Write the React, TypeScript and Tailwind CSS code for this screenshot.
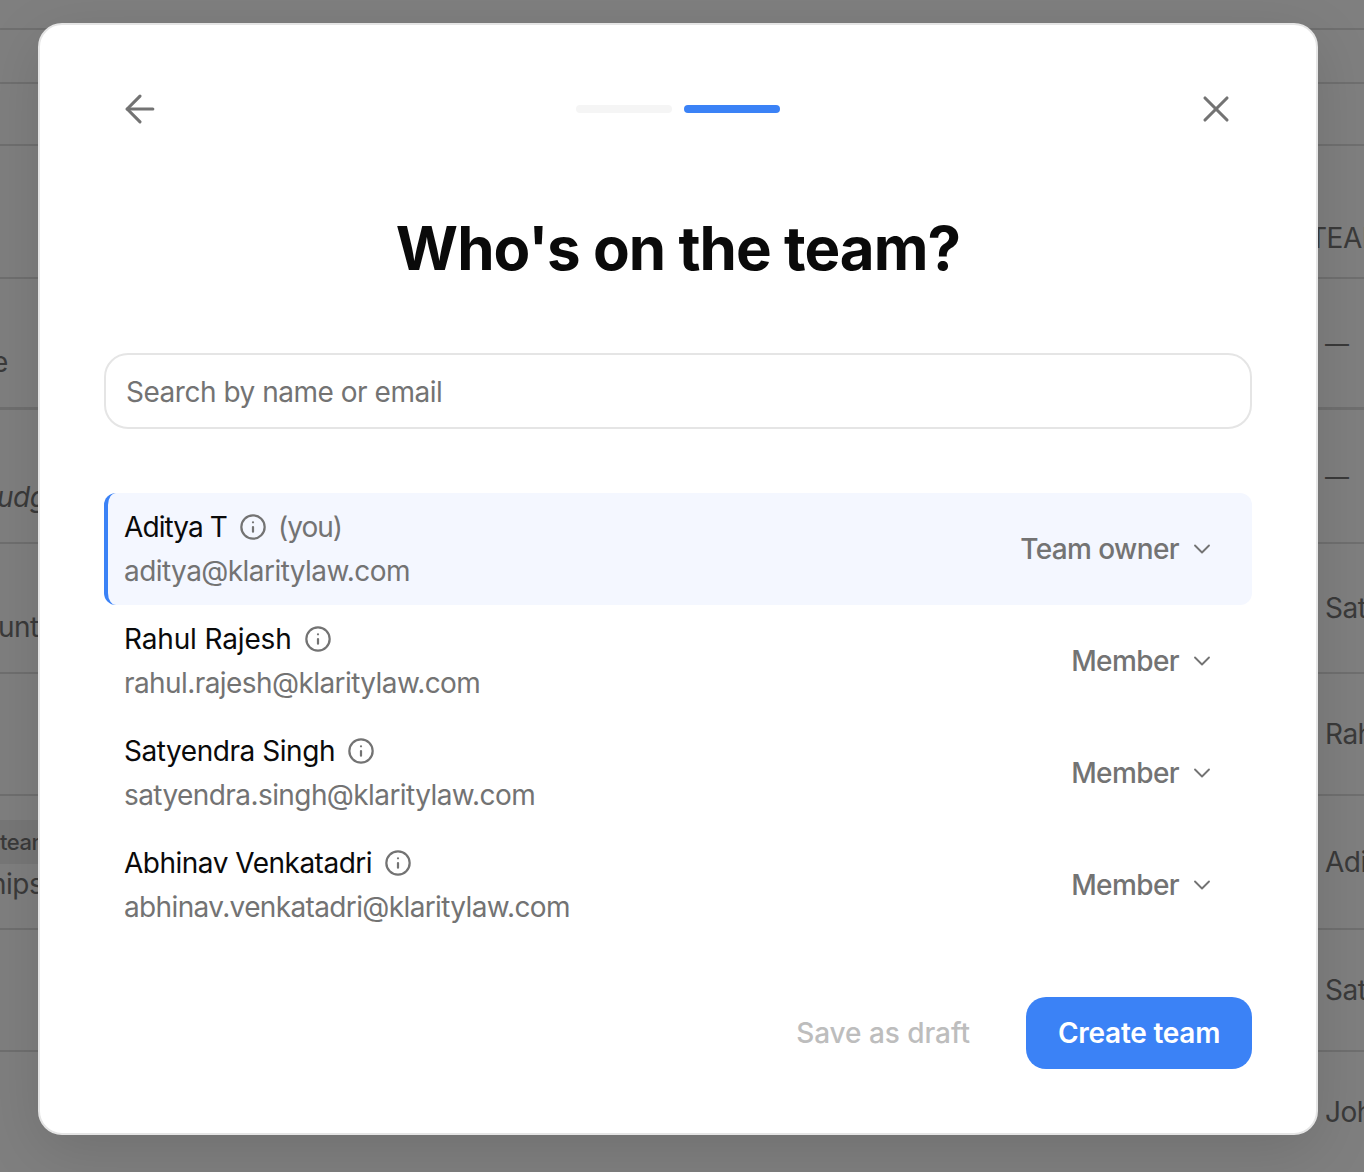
import { ArrowLeft, X, Info, ChevronDown } from "lucide-react";

const bgRows = [
  { h: "h-[30px]", border: "border-b-2", leftClass: "", rightClass: "", left: "", right: "" },
  { h: "h-[54px]", border: "border-b-2", leftClass: "", rightClass: "", left: "", right: "", leftOnly: true },
  { h: "h-[62px]", border: "border-b-2", leftClass: "", rightClass: "", left: "", right: "", leftOnly: true },
  { h: "h-[133px]", border: "border-b-2", leftClass: "", rightClass: "pt-[52px] -ml-[16px]", left: "", right: "TEAM" },
  { h: "h-[131px]", border: "border-b-[3px]", leftClass: "pt-[38px] -ml-[8px]", rightClass: "text-[24px] pt-[1px]", left: "e", right: "—" },
  { h: "h-[134px]", border: "border-b-2", leftClass: "pt-[42px] italic -ml-[3px]", rightClass: "text-[24px] pt-[1px]", left: "udg", right: "—" },
  { h: "h-[130px]", border: "border-b-2", leftClass: "pt-[38px] -ml-[2px]", rightClass: "", left: "unts", right: "Sat" },
  { h: "h-[122px]", border: "border-b-2", leftClass: "", rightClass: "", left: "", right: "Rah" },
  { h: "h-[134px]", border: "border-b-2", leftClass: "", rightClass: "", left: "", right: "Adi", chip: true },
  { h: "h-[122px]", border: "border-b-2", leftClass: "", rightClass: "", left: "", right: "Sat" },
  { h: "h-[120px]", border: "", leftClass: "", rightClass: "", left: "", right: "Joh" },
];

const people = [
  { name: "Aditya T", nameTrack: "tracking-[-0.9px]", email: "aditya@klaritylaw.com", emailTrack: "tracking-[-0.56px]", role: "Team owner", you: true },
  { name: "Rahul Rajesh", nameTrack: "tracking-[-0.15px]", email: "rahul.rajesh@klaritylaw.com", emailTrack: "tracking-[-0.58px]", role: "Member" },
  { name: "Satyendra Singh", nameTrack: "tracking-[-0.45px]", email: "satyendra.singh@klaritylaw.com", emailTrack: "tracking-[-0.58px]", role: "Member" },
  { name: "Abhinav Venkatadri", nameTrack: "tracking-[-0.5px]", email: "abhinav.venkatadri@klaritylaw.com", emailTrack: "tracking-[-0.63px]", role: "Member" },
];

function BackgroundPage() {
  return (
    <div className="h-[1172px] overflow-hidden bg-[#7f7f7f] text-[28px] tracking-[-0.5px] text-[#3a3a3a]">
      {bgRows.map((r, i) => (
        <div key={i} className={`${r.h} ${r.border} border-[#6f6f6f] flex items-center justify-between`}>
          <div className="w-[60px] flex flex-col items-start whitespace-nowrap">
            {r.chip ? (
              <>
                <span className="w-[60px] bg-[#777777] text-[22px] font-medium leading-[44px]">team</span>
                <span className="-ml-[10px] leading-[40px]">hips</span>
              </>
            ) : (
              <span className={r.leftClass}>{r.left}</span>
            )}
          </div>
          <div className="w-[39px] whitespace-nowrap">
            <span className={`block ${r.rightClass}`}>{r.right}</span>
          </div>
        </div>
      ))}
    </div>
  );
}

export default function App() {
  return (
    <div className="relative h-[1172px] w-[1364px] overflow-hidden font-['Inter',sans-serif]">
      <BackgroundPage />
      <div className="absolute left-[38px] top-[23px] w-[1280px] h-[1112px] rounded-[24px] border-2 border-[#e5e5e5] bg-white px-[64px] pt-[60px] pb-[64px] shadow-[0_16px_60px_rgba(0,0,0,0.12)] flex flex-col">
        <div className="flex items-center justify-between px-[14px] h-[48px]">
          <ArrowLeft size={44} strokeWidth={1.7} className="text-[#737373]" />
          <div className="flex gap-[12px]">
            <div className="w-[96px] h-[8px] rounded-full bg-[#f5f5f5]" />
            <div className="w-[96px] h-[8px] rounded-full bg-[#3b82f6]" />
          </div>
          <X size={44} strokeWidth={1.7} className="text-[#737373]" />
        </div>

        <h1 className="mt-[79px] mb-[69px] text-center text-[60px] leading-[72px] font-bold tracking-[-0.016em] text-[#0a0a0a]">
          Who's on the team?
        </h1>

        <div className="h-[76px] rounded-[24px] border-2 border-[#e5e5e5] flex items-center pl-[20px] pt-[1px] text-[28px] tracking-[-0.48px] text-[#737373]">
          Search by name or email
        </div>

        <div className="mt-[64px] flex flex-col">
          {people.map((p) => (
            <div
              key={p.email}
              className={`h-[112px] rounded-[12px] border-l-4 pl-[16px] pr-[36px] py-[14px] flex items-center justify-between ${
                p.you ? "border-[#3b82f6] bg-[#f4f7ff]" : "border-transparent"
              }`}
            >
              <div className="flex flex-col gap-[4px]">
                <div className="h-[40px] flex items-center text-[28px] text-[#0a0a0a]">
                  <span className={p.nameTrack}>{p.name}</span>
                  <Info size={28} strokeWidth={1.9} className="ml-[12px] text-[#737373]" />
                  {p.you && <span className="ml-[11px] tracking-[-1px] text-[#737373]">(you)</span>}
                </div>
                <div className={`h-[40px] flex items-center text-[28px] text-[#737373] ${p.emailTrack}`}>{p.email}</div>
              </div>
              <div className="flex items-center text-[28px] font-medium tracking-[-0.6px] text-[#737373]">
                <span>{p.role}</span>
                <ChevronDown size={28} strokeWidth={1.6} className="ml-[9px]" />
              </div>
            </div>
          ))}
        </div>

        <div className="mt-[56px] flex items-center justify-end">
          <span className="text-[28px] font-medium tracking-[-0.05px] text-[#bdbdbd]">Save as draft</span>
          <button className="ml-[56px] h-[72px] w-[226px] rounded-[20px] bg-[#3b82f6] text-[28px] font-semibold tracking-[-0.25px] text-white">
            Create team
          </button>
        </div>
      </div>
    </div>
  );
}
